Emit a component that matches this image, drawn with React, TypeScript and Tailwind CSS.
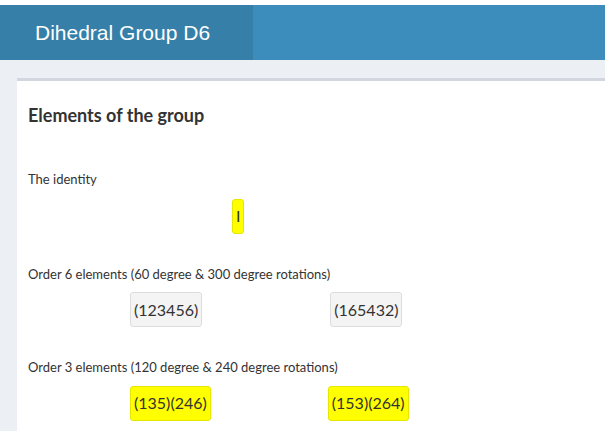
export default function App() {
  const btn = "h-[35px] px-[3px] flex items-center rounded-[3px] border text-[16px] text-[#333]";
  const gray = btn + " bg-[#f4f4f4] border-[#ddd]";
  const yel = btn + " bg-[#ffff00] border-[#e6e600]";
  return (
    <div className="w-[605px] h-[431px] overflow-hidden bg-[#ecf0f5] pt-[5px] bg-clip-content" style={{ fontFamily: "Lato, 'Open Sans', sans-serif" }}>
      <div className="bg-white h-[5px] -mt-[5px]" />
      <div className="flex h-[55px] bg-[#3c8dbc]">
        <div className="w-[253px] bg-[#367fa9] flex items-center pl-[35px] text-white text-[21px]" style={{ fontFamily: "'Liberation Sans', Arial, sans-serif" }}>
          Dihedral Group D6
        </div>
      </div>
      <div className="ml-[17px] mt-[18px] bg-white border-t-[3px] border-[#d2d6de] h-[400px] pl-[11px] text-[#333]">
        <div className="pt-[21px] text-[18px] font-bold">Elements of the group</div>
        <div className="mt-[41px] text-[13px]">The identity</div>
        <div className="mt-[9px] flex ml-[204px]"><div className={yel}>I</div></div>
        <div className="mt-[31px] text-[13px]">Order 6 elements (60 degree &amp; 300 degree rotations)</div>
        <div className="mt-[8px] flex">
          <div className="ml-[102px]"><div className={gray}>(123456)</div></div>
          <div className="ml-[128px]"><div className={gray}>(165432)</div></div>
        </div>
        <div className="mt-[31px] text-[13px]">Order 3 elements (120 degree &amp; 240 degree rotations)</div>
        <div className="mt-[8px] flex">
          <div className="ml-[102px]"><div className={yel}>(135)(246)</div></div>
          <div className="ml-[117px]"><div className={yel}>(153)(264)</div></div>
        </div>
      </div>
    </div>
  );
}
